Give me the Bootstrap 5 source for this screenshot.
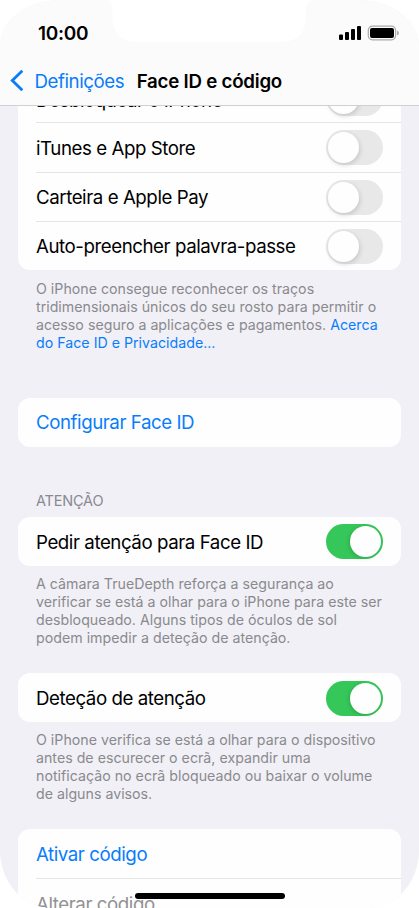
<!DOCTYPE html>
<html lang="pt">
<head>
<meta charset="utf-8">
<meta name="viewport" content="width=device-width, initial-scale=1">
<title>Face ID e código</title>
<link href="https://cdn.jsdelivr.net/npm/bootstrap@5.3.0/dist/css/bootstrap.min.css" rel="stylesheet">
<style>
html, body { height: 908px; overflow: hidden; background: #fff; }
body { font-family: Inter, "Liberation Sans", sans-serif; font-size: 18.7px; line-height: 24px; letter-spacing: -.44px; color: #000; }
.phone { width: 419px; height: 908px; background: #f1f0f6; border-radius: 60px 60px 51px 51px / 46px 46px 58px 58px; }
.top-area { height: 106px; background: #fbfbfb; border-bottom: 1px solid #d0d0d2; z-index: 2; }
.notch { top: 0; left: 104px; }
.clock { left: 38px; top: 22px; font-size: 19px; font-weight: 600; letter-spacing: -.3px; }
.signals { left: 339px; top: 25px; }
.title-row { height: 24px; top: 69px; left: 10px; }
.title-row span { padding-top: 1px; }
.blue, .setting.blue { color: #087dfc; text-decoration: none; }
.back-name { margin-left: -.5px; }
.page-name { font-weight: 600; margin-left: 12.5px; letter-spacing: -.23px; }
.group { margin: 0 18px; border-radius: 12px; background: #fefefe; --bs-list-group-bg: #fefefe; }
.setting { height: 49px; padding: 0 18px 0 0; margin-left: 18px; border: 0; background: transparent; color: #000; white-space: nowrap; }
.setting span { padding-top: 2.6px; }
.first-group .setting { height: 49.3px; }
.first-group .setting:first-child span { padding-top: 6.4px; }
.first-group .setting:first-child .toggle { margin-top: 2px; }
.setting + .setting { border-top: 1px solid #e5e5e7; }
.first-group { margin-top: -33px; }
.note { margin: 8.7px 0 0 36px; font-size: 14.2px; line-height: 18px; letter-spacing: .01px; color: #8a8a8e; white-space: nowrap; }
.first-group + .note { margin-top: 9.5px; }
.setup-group { margin-top: 46px; }
.later-group { margin-top: 26.4px; }
.heading { margin: 45.3px 0 7px 36px; font-size: 14.5px; line-height: 18px; letter-spacing: -.2px; color: #8a8a8e; }
.toggle.form-check-input { width: 57px; height: 35px; margin: 1px 0 0; border: 0; background-color: #e8e8e8; background-image: none; position: relative; flex: none; opacity: 1; }
.toggle::before { content: ""; display: block; width: 31px; height: 31px; margin: 2px; border-radius: 50%; background: #fefefe; box-shadow: 1px 2px 5px rgba(0,0,0,.15); }
.toggle.form-check-input:checked { background-color: #35c759; background-image: none; }
.toggle:checked::before { margin-left: 24px; box-shadow: -1px 1px 4px rgba(0,0,0,.15); }
.home-bar { left: 135px; top: 893px; width: 150px; height: 6px; background: #000; border-radius: 3px; }
.setting .muted { color: #929294; padding-top: 3px; }
</style>
</head>
<body>
<div class="phone position-relative overflow-hidden d-flex flex-column">
  <header class="top-area position-relative flex-shrink-0">
    <svg class="notch position-absolute" width="212" height="43"><path d="M0 0C7 0 8.500 4 8.500 12V14C8.500 33 16 42 34 42H176C194 42 202 33 202 14V12C202 4 204 0 211 0Z" fill="#fff"/></svg>
    <span class="clock position-absolute">10:00</span>
    <svg class="signals position-absolute" width="60" height="16"><g fill="#000"><rect y="9.500" width="4" height="5.500" rx="1"/><rect x="6" y="7" width="4" height="8" rx="1"/><rect x="12" y="4" width="4" height="11" rx="1"/><rect x="18" y="1" width="4" height="14" rx="1"/><rect x="31" y="3" width="24" height="10" rx="2"/></g><rect x="29.300" y="1.200" width="27.300" height="13.600" rx="4" fill="none" stroke="#aaa" stroke-width="1.200"/><path d="M58 5.500Q60 6.500 60 8T58 10.500Z" fill="#aaa"/></svg>
    <nav class="title-row position-absolute d-flex align-items-center text-nowrap">
      <a class="blue d-flex align-items-center" href="#"><svg width="25" height="24"><path d="M12.300 1.800 2.300 11.500 12.300 21.200" fill="none" stroke="#087dfc" stroke-width="2.800"/></svg><span class="back-name">Definições</span></a>
      <span class="page-name">Face ID e código</span>
    </nav>
  </header>
  <main class="flex-grow-1">
    <div class="group list-group first-group">
      <label class="setting list-group-item d-flex align-items-center justify-content-between"><span>Desbloquear o iPhone</span><input class="toggle form-check-input rounded-pill" type="checkbox"></label>
      <label class="setting list-group-item d-flex align-items-center justify-content-between"><span>iTunes e App Store</span><input class="toggle form-check-input rounded-pill" type="checkbox"></label>
      <label class="setting list-group-item d-flex align-items-center justify-content-between"><span>Carteira e Apple Pay</span><input class="toggle form-check-input rounded-pill" type="checkbox"></label>
      <label class="setting list-group-item d-flex align-items-center justify-content-between"><span>Auto-preencher palavra-passe</span><input class="toggle form-check-input rounded-pill" type="checkbox"></label>
    </div>
    <p class="note">O iPhone consegue reconhecer os traços<br>tridimensionais únicos do seu rosto para permitir o<br>acesso seguro a aplicações e pagamentos. <a class="blue" href="#">Acerca<br>do Face ID e Privacidade...</a></p>
    <div class="group list-group setup-group"><a class="setting list-group-item d-flex align-items-center blue" href="#"><span>Configurar Face ID</span></a></div>
    <h2 class="heading fw-normal">ATENÇÃO</h2>
    <div class="group list-group"><label class="setting list-group-item d-flex align-items-center justify-content-between"><span>Pedir atenção para Face ID</span><input class="toggle form-check-input rounded-pill" type="checkbox" checked></label></div>
    <p class="note">A câmara TrueDepth reforça a segurança ao<br>verificar se está a olhar para o iPhone para este ser<br>desbloqueado. Alguns tipos de óculos de sol<br>podem impedir a deteção de atenção.</p>
    <div class="group list-group later-group"><label class="setting list-group-item d-flex align-items-center justify-content-between"><span>Deteção de atenção</span><input class="toggle form-check-input rounded-pill" type="checkbox" checked></label></div>
    <p class="note">O iPhone verifica se está a olhar para o dispositivo<br>antes de escurecer o ecrã, expandir uma<br>notificação no ecrã bloqueado ou baixar o volume<br>de alguns avisos.</p>
    <div class="group list-group later-group"><a class="setting list-group-item d-flex align-items-center blue" href="#"><span>Ativar código</span></a><div class="setting list-group-item d-flex align-items-center"><span class="muted">Alterar código</span></div></div>
  </main>
  <div class="home-bar position-absolute"></div>
</div>
<script src="https://cdn.jsdelivr.net/npm/bootstrap@5.3.0/dist/js/bootstrap.bundle.min.js"></script>
</body>
</html>
